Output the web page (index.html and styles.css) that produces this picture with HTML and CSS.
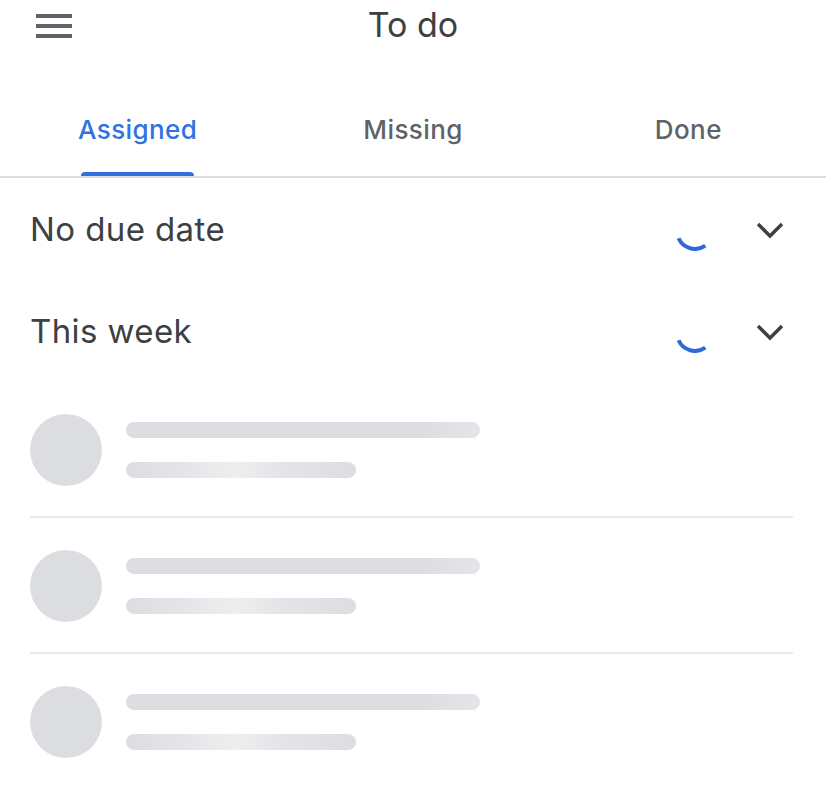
FILE: index.html
```html
<!DOCTYPE html>
<html lang="en">
<head>
<meta charset="utf-8">
<title>To do</title>
<link rel="stylesheet" href="styles.css">
</head>
<body>
<header class="topbar">
  <button class="menu-btn" aria-label="Menu">
    <svg width="48" height="48" viewBox="0 0 24 24"><path fill="#5f6368" d="M3 18h18v-2H3v2zm0-5h18v-2H3v2zm0-7v2h18V6H3z"/></svg>
  </button>
  <h1 class="title">To do</h1>
  <span></span>
</header>
<nav class="tabs">
  <div class="tab active"><span class="tab-label">Assigned</span><span class="tab-ind"></span></div>
  <div class="tab"><span class="tab-label">Missing</span><span class="tab-ind"></span></div>
  <div class="tab"><span class="tab-label">Done</span><span class="tab-ind"></span></div>
</nav>
<section class="group">
  <span class="group-title">No due date</span>
  <svg class="spinner" width="40" height="40" viewBox="0 0 40 40"><path d="M3.56 27.3A18 18 0 0 0 30.3 34.7" fill="none" stroke="#2f6bd8" stroke-width="4"/></svg>
  <svg class="chev" width="52" height="52" viewBox="0 0 52 52"><polyline points="14,21 26,33 38,21" fill="none" stroke="#3c4043" stroke-width="3.4"/></svg>
</section>
<section class="group">
  <span class="group-title">This week</span>
  <svg class="spinner" width="40" height="40" viewBox="0 0 40 40"><path d="M3.56 27.3A18 18 0 0 0 30.3 34.7" fill="none" stroke="#2f6bd8" stroke-width="4"/></svg>
  <svg class="chev" width="52" height="52" viewBox="0 0 52 52"><polyline points="14,21 26,33 38,21" fill="none" stroke="#3c4043" stroke-width="3.4"/></svg>
</section>
<ul class="skeleton-list">
  <li class="sk-row"><span class="sk-avatar"></span><span class="sk-lines"><span class="sk-bar long"></span><span class="sk-bar short"></span></span></li>
  <li class="sk-row"><span class="sk-avatar"></span><span class="sk-lines"><span class="sk-bar long"></span><span class="sk-bar short"></span></span></li>
  <li class="sk-row"><span class="sk-avatar"></span><span class="sk-lines"><span class="sk-bar long"></span><span class="sk-bar short"></span></span></li>
</ul>
</body>
</html>
```
FILE: styles.css
```css
* { box-sizing: border-box; }
html, body { margin: 0; padding: 0; background: #fff; }
body {
  font-family: Inter, Roboto, "Liberation Sans", sans-serif;
  color: #3c4043;
  width: 826px;
  overflow: hidden;
}
.topbar {
  display: grid;
  grid-template-columns: 1fr auto 1fr;
  align-items: start;
  height: 76px;
  padding: 0 30px;
}
.menu-btn {
  width: 48px;
  height: 48px;
  margin-top: 2px;
  padding: 0;
  border: 0;
  background: none;
  display: block;
}
.menu-btn svg { display: block; }
.title {
  margin: 5px 0 0;
  font-size: 34px;
  line-height: 40px;
  font-weight: 400;
  color: #3c4043;
}
.tabs {
  display: grid;
  grid-template-columns: 1fr 1fr 1fr;
  height: 102px;
  border-bottom: 2px solid #dadce0;
}
.tab {
  display: flex;
  flex-direction: column;
  align-items: center;
  justify-content: space-between;
  padding-top: 39px;
}
.tab-label {
  font-size: 26px;
  line-height: 30px;
  font-weight: 500;
  letter-spacing: 0.4px;
  color: #5f6368;
}
.tab-ind {
  width: 113px;
  height: 4px;
  border-radius: 4px 4px 0 0;
}
.tab.active .tab-label { color: #2f73e3; }
.tab.active .tab-ind { background: #2f6fe0; }
.group {
  display: flex;
  align-items: center;
  height: 102px;
  padding: 0 30px 0 30px;
}
.group-title {
  flex: 1;
  font-size: 33px;
  line-height: 40px;
  letter-spacing: 0.4px;
  color: #3c4043;
}
.spinner {
  display: block;
  margin-top: 4px;
  margin-right: 29px;
}
.chev { display: block; }
.skeleton-list {
  list-style: none;
  margin: 0;
  padding: 0 33px 0 30px;
}
.sk-row {
  display: flex;
  align-items: flex-start;
  gap: 24px;
  padding: 32px 0 30px;
  border-bottom: 2px solid #e8e8ec;
}
.sk-avatar {
  width: 72px;
  height: 72px;
  border-radius: 50%;
  background: #dcdde0;
  flex: none;
}
.sk-lines {
  display: flex;
  flex-direction: column;
  gap: 24px;
  padding-top: 8px;
}
.sk-bar {
  display: block;
  height: 16px;
  border-radius: 8px;
}
.sk-bar.long {
  width: 354px;
  background: linear-gradient(90deg, #dcdde0 0%, #dcdde0 82%, #e4e5e8 100%);
}
.sk-bar.short {
  width: 230px;
  background: linear-gradient(90deg, #dcdde0 0%, #e6e7ea 30%, #eeeef0 47%, #e4e5e8 68%, #dcdde0 100%);
}
```
